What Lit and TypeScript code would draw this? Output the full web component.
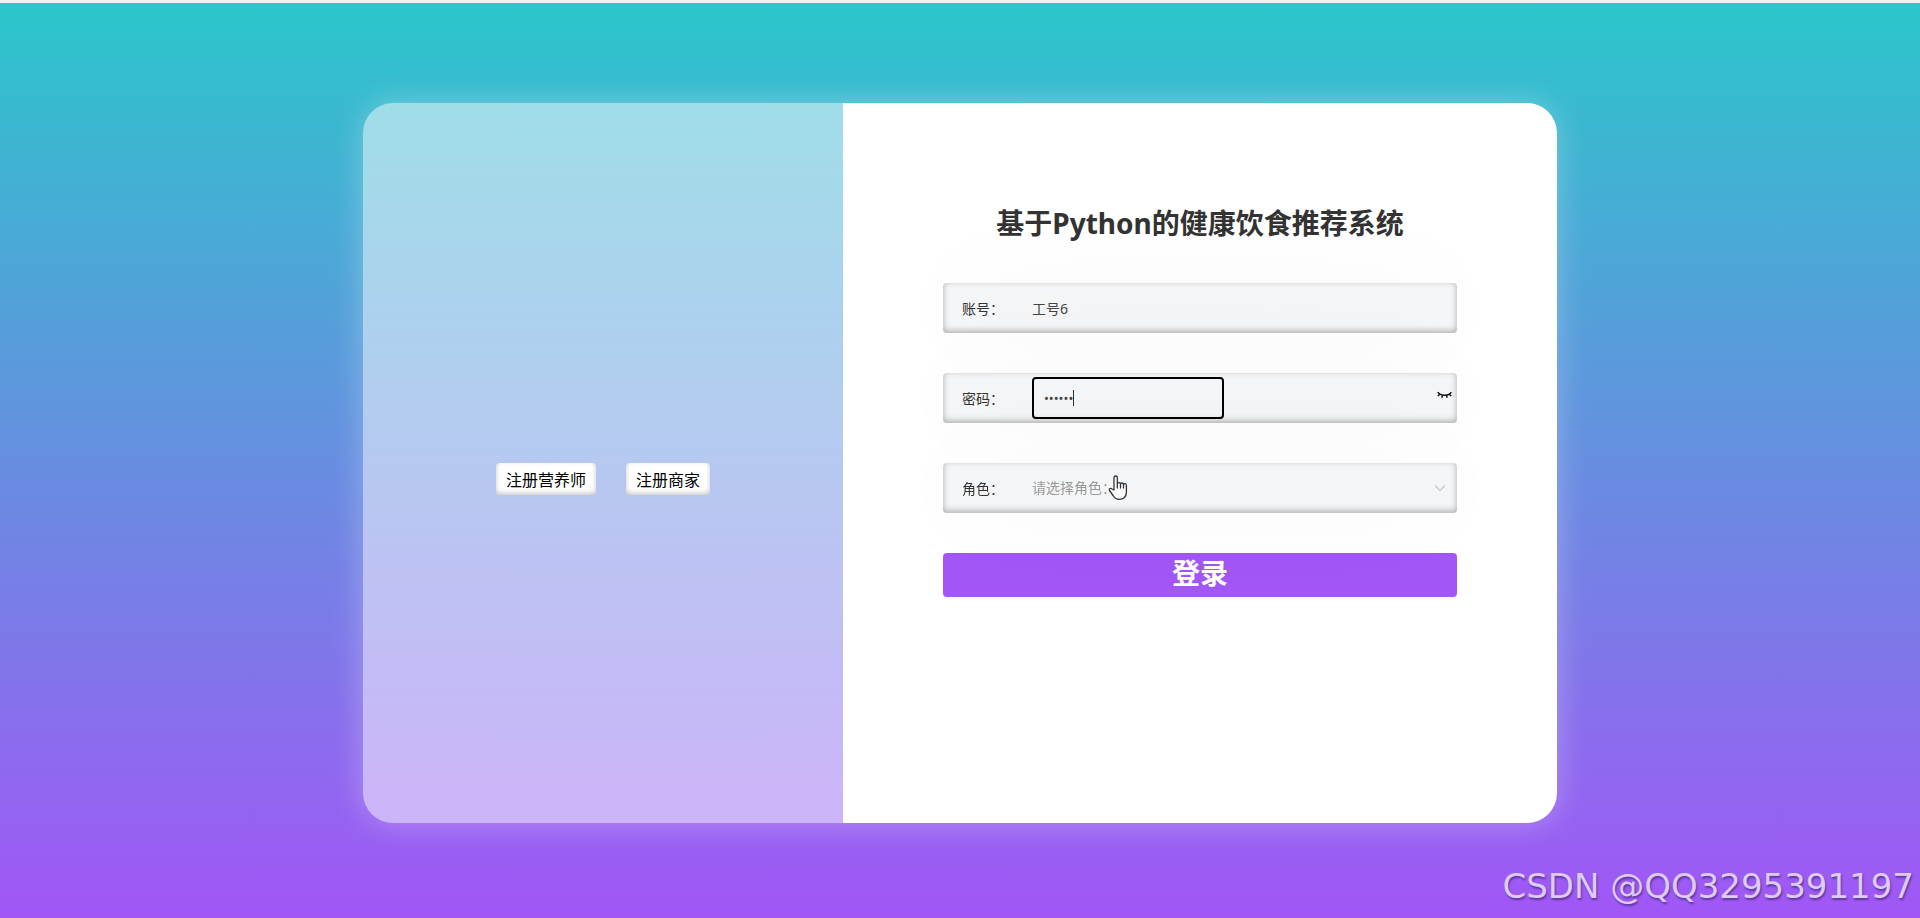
import { LitElement, html, css } from "lit";
import { customElement, state, query } from "lit/decorators.js";

@customElement("app-root")
export class AppRoot extends LitElement {
  static styles = css`
    :host {
      display: block;
      font-family: "Noto Sans", "Noto Sans CJK SC", sans-serif;
      color: #333;
    }
    * {
      box-sizing: border-box;
    }
    .page {
      position: relative;
      display: flex;
      align-items: center;
      justify-content: center;
      min-height: 100vh;
      padding: 40px 0 36px;
      border-top: 3px solid #e8f6f0;
      background: linear-gradient(180deg, #2bc6cb, #a256f6);
    }
    .card {
      display: flex;
      width: 90%;
      max-width: 1194px;
      min-height: 720px;
      border-radius: 30px;
      overflow: hidden;
      box-shadow: 0 0 32px rgba(255, 255, 255, 0.3);
    }
    .side {
      flex: 0 0 40.2%;
      display: flex;
      align-items: center;
      justify-content: center;
      gap: 30px;
      padding-top: 32px;
      background: rgba(255, 255, 255, 0.52);
    }
    .register {
      height: 32px;
      padding: 0 10px;
      border: 0;
      border-radius: 4px;
      background: #fff;
      box-shadow: inset 0 -2px 5px rgba(0, 0, 0, 0.22);
      font: 16px/32px "Noto Sans CJK SC", sans-serif;
      color: #000;
    }
    .main {
      flex: 1;
      display: flex;
      flex-direction: column;
      align-items: center;
      padding-top: 100px;
      background: #fff;
    }
    .form {
      display: flex;
      flex-direction: column;
      gap: 40px;
      width: 72%;
    }
    .title {
      margin: 0;
      font-size: 28px;
      line-height: 40px;
      text-align: center;
      white-space: nowrap;
    }
    .field {
      position: relative;
      display: flex;
      align-items: center;
      height: 50px;
      padding: 0 5px 0 19px;
      border-radius: 4px;
      background: #f4f5f6;
      box-shadow: inset 0 -2px 6px rgba(0, 0, 0, 0.3), 0 0 120px rgba(30, 40, 90, 0.03);
      font-size: 14px;
    }
    .label {
      width: 70px;
    }
    .control {
      width: 192px;
      height: 42px;
      padding: 0;
      border: 0;
      border-radius: 4px;
      outline: 0;
      background: transparent;
      font: inherit;
      color: #444;
    }
    .password {
      padding: 0 10px;
      border: 2px solid #000;
      font-size: 13px;
      caret-color: transparent;
    }
    .caret {
      position: absolute;
      left: 130px;
      top: 17px;
      width: 1px;
      height: 16px;
      background: #333;
    }
    .select {
      flex: 1;
      appearance: none;
      color: #999;
    }
    .eye {
      margin-left: auto;
      padding: 0;
      border: 0;
      background: none;
      line-height: 0;
    }
    .chevron {
      margin-right: 6px;
    }
    .login {
      height: 44px;
      padding: 0 0 6px;
      border: 0;
      border-radius: 4px;
      background: #a156f5;
      color: #fff;
      font: 700 28px/38px "Noto Sans CJK SC", sans-serif;
    }
    .pointer {
      position: absolute;
      left: 1108px;
      top: 472px;
    }
    .mark {
      position: absolute;
      right: 6px;
      bottom: 8px;
      font: 34px/48px "DejaVu Sans", sans-serif;
      color: #dccbf3;
      text-shadow: 1px 2px 2px rgba(70, 40, 120, 0.7);
    }
  `;

  @state() private visible = false;
  @query(".password") private password!: HTMLInputElement;

  firstUpdated() {
    this.password.focus();
  }

  render() {
    return html`
      <main class="page">
        <section class="card">
          <div class="side">
            <button class="register" type="button">注册营养师</button>
            <button class="register" type="button">注册商家</button>
          </div>
          <div class="main">
            <form class="form" @submit=${(e: Event) => e.preventDefault()}>
              <h1 class="title">基于Python的健康饮食推荐系统</h1>
              <div class="field">
                <label class="label" for="account">账号：</label>
                <input class="control" id="account" type="text" .value=${"工号6"} />
              </div>
              <div class="field">
                <label class="label" for="password">密码：</label>
                <input class="control password" id="password"
                  type=${this.visible ? "text" : "password"} value="123456" />
                <span class="caret"></span>
                <button class="eye" type="button" aria-label="密码"
                  @click=${() => (this.visible = !this.visible)}>
                  <svg width="15" height="18" viewBox="0 0 15 18" fill="none" stroke="#111" stroke-width="1.4">
                    <path d="M.7 3.200Q2.500 6 7.500 6.200T14.300 3.200M2.700 5.200.8 7M5.500 6.200 4.800 8.700M9.500 6.200l.7 2.500M12.300 5.200 14.200 7" />
                  </svg>
                </button>
              </div>
              <div class="field">
                <label class="label" for="role">角色：</label>
                <select class="control select" id="role">
                  <option>请选择角色：</option>
                </select>
                <svg class="chevron" width="12" height="8" viewBox="0 0 12 8" fill="none" stroke="#c8cacd" stroke-width="1.3">
                  <path d="M1 1.500 6 6.500l5-5" />
                </svg>
              </div>
              <button class="login" type="submit">登录</button>
            </form>
          </div>
        </section>
        <svg class="pointer" width="20" height="26" viewBox="0 0 20 26" fill="#fff" stroke="#333" stroke-width="1.300" stroke-linejoin="round" stroke-linecap="round">
          <path d="M6 15V3q0-2 1.700-2T9.300 3v6q.2-1.300 1.600-1.300T12.500 9q.2-1 1.500-1t1.500 1.500q.3-.8 1.500-.8T18.400 10.500V17q0 4-2.500 6-1.500 1.300-4.500 1.300-4 0-6-3.300L1.500 15.500Q.8 14 2 13.500q1-.4 2 .5zM9.300 9v4M12.500 9v4M15.500 9.500V13" />
        </svg>
        <div class="mark">CSDN @QQ3295391197</div>
      </main>
    `;
  }
}
